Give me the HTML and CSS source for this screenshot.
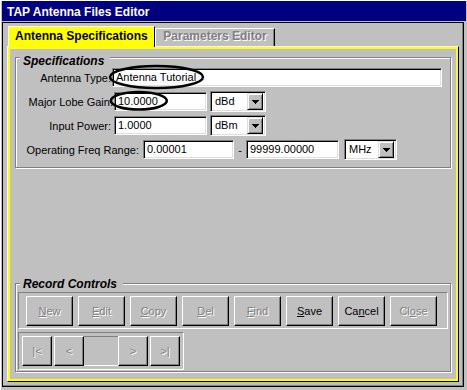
FILE: index.html
```html
<!DOCTYPE html>
<html>
<head>
<meta charset="utf-8">
<link rel="stylesheet" href="styles.css">
</head>
<body>
<div class="window">
  <div class="titlebar">TAP Antenna Files Editor</div>
  <div class="frame">
    <div class="tabs">
      <div class="tab active">Antenna Specifications</div>
      <div class="tab inactive">Parameters Editor</div>
    </div>
    <div class="panel">
      <div class="group spec">
        <div class="legend">Specifications</div>
        <div class="rows">
          <div class="row">
            <span class="lbl lbl-type">Antenna Type:</span>
            <div class="field f-type">Antenna Tutorial</div>
          </div>
          <div class="row">
            <span class="lbl lbl-gain">Major Lobe Gain:</span>
            <div class="field f-num">10.0000</div>
            <div class="combo c-unit"><span>dBd</span><span class="dd"><svg width="7" height="4" viewBox="0 0 7 4" shape-rendering="crispEdges"><path d="M0 0h7v1h-1v1h-1v1h-1v1h-1v-1h-1v-1h-1v-1h-1z" fill="#000"/></svg></span></div>
          </div>
          <div class="row">
            <span class="lbl lbl-power">Input Power:</span>
            <div class="field f-num">1.0000</div>
            <div class="combo c-unit"><span>dBm</span><span class="dd"><svg width="7" height="4" viewBox="0 0 7 4" shape-rendering="crispEdges"><path d="M0 0h7v1h-1v1h-1v1h-1v1h-1v-1h-1v-1h-1v-1h-1z" fill="#000"/></svg></span></div>
          </div>
          <div class="row">
            <span class="lbl lbl-freq">Operating Freq Range:</span>
            <div class="field f-lo">0.00001</div>
            <span class="dash">-</span>
            <div class="field f-hi">99999.00000</div>
            <div class="combo c-freq"><span>MHz</span><span class="dd"><svg width="7" height="4" viewBox="0 0 7 4" shape-rendering="crispEdges"><path d="M0 0h7v1h-1v1h-1v1h-1v1h-1v-1h-1v-1h-1v-1h-1z" fill="#000"/></svg></span></div>
          </div>
        </div>
      </div>
      <div class="group rec">
        <div class="legend">Record Controls</div>
        <div class="bar actions">
          <div class="btn off"><u>N</u>ew</div>
          <div class="btn off"><u>E</u>dit</div>
          <div class="btn off"><u>C</u>opy</div>
          <div class="btn off"><u>D</u>el</div>
          <div class="btn off"><u>F</u>ind</div>
          <div class="btn"><u>S</u>ave</div>
          <div class="btn">Ca<u>n</u>cel</div>
          <div class="btn off">Cl<u>o</u>se</div>
        </div>
        <div class="bar nav">
          <div class="nbtn off">|&lt;</div>
          <div class="nbtn off gap">&lt;</div>
          <div class="pos"></div>
          <div class="nbtn off">&gt;</div>
          <div class="nbtn off gap">&gt;|</div>
        </div>
      </div>
    </div>
  </div>
  <svg class="marks" width="467" height="390" viewBox="0 0 467 390">
    <ellipse cx="156.5" cy="77" rx="46.5" ry="11" fill="none" stroke="#000" stroke-width="2.5"/>
    <ellipse cx="138.8" cy="100.8" rx="28" ry="8.7" fill="none" stroke="#000" stroke-width="2.5"/>
  </svg>
</div>
</body>
</html>
```
FILE: styles.css
```css
* { box-sizing: border-box; }
html, body { margin: 0; padding: 0; }
body {
  background: #c0c0c0;
  font-family: "Liberation Sans", Arial, sans-serif;
  font-size: 11px;
  color: #000;
}
.window {
  position: relative;
  width: 467px;
  height: 390px;
  background: #c0c0c0;
  padding: 1px 1px 0 2px;
  box-shadow: inset 1px 1px 0 #fff;
  overflow: hidden;
}
.titlebar {
  height: 20px;
  background: #000080;
  color: #fff;
  font-weight: bold;
  font-size: 12px;
  line-height: 20px;
  padding: 1px 0 0 5px;
  white-space: nowrap;
}
.frame {
  margin-top: 1px;
  width: 462px;
  height: 365px;
  border: 1px solid #000;
  box-shadow: inset -1px -1px 0 #808080;
}
.tabs {
  display: flex;
  align-items: flex-end;
  height: 23px;
  padding: 3px 0 0 5px;
}
.tab {
  font-weight: bold;
  font-size: 12px;
  white-space: nowrap;
}
.tab.active {
  position: relative;
  z-index: 1;
  width: 147px;
  height: 21px;
  margin-bottom: -1px;
  background: #ffff00;
  border-top: 1px solid #fff;
  border-left: 1px solid #fff;
  border-right: 1px solid #000;
  line-height: 18px;
  padding-left: 6px;
}
.tab.inactive {
  width: 120px;
  height: 18px;
  border-top: 1px solid #fff;
  border-left: 1px solid #fff;
  border-right: 1px solid #000;
  box-shadow: inset -1px 0 0 #808080;
  color: #808080;
  text-shadow: 1px 1px 0 #fff;
  line-height: 14px;
  text-align: center;
}
.panel {
  margin-left: 4px;
  width: 452px;
  height: 336px;
  border-top: 1px solid #fff;
  border-left: 1px solid #fff;
  border-right: 1px solid #000;
  border-bottom: 1px solid #000;
  box-shadow: inset 0 0 0 2px #ffff00;
  padding: 10px 7px 9px 7px;
  display: flex;
  flex-direction: column;
  justify-content: space-between;
}
.group {
  border: 1px solid #808080;
  box-shadow: inset 1px 1px 0 #fff, 1px 1px 0 #fff;
}
.legend {
  width: max-content;
  background: #c0c0c0;
  font-weight: bold;
  font-style: italic;
  font-size: 12px;
  line-height: 12px;
  padding: 0 6px 0 3px;
  margin-left: 4px;
  white-space: nowrap;
}
.spec { padding-bottom: 7px; }
.spec .legend { margin-top: -3px; }
.rec { padding-bottom: 1px; }
.rec .legend { margin-top: -6px; }
.rows {
  display: flex;
  flex-direction: column;
  gap: 3px;
}
.row {
  display: flex;
  align-items: center;
  height: 21px;
  white-space: nowrap;
}
.lbl {
  flex: none;
  text-align: right;
  padding-right: 1px;
}
.lbl-type { width: 96px; }
.lbl-gain { width: 98px; }
.lbl-power { width: 98px; padding-right: 3px; }
.lbl-freq { width: 127px; padding-right: 4px; }
.field, .combo {
  height: 19px;
  background: #fff;
  border-top: 1px solid #808080;
  border-left: 1px solid #808080;
  border-bottom: 1px solid #fff;
  border-right: 1px solid #fff;
  box-shadow: inset 1px 1px 0 #000, inset -1px -1px 0 #dfdfdf;
  padding-left: 3px;
  line-height: 17px;
  flex: none;
}
.f-type { width: 330px; }
.f-num { width: 93px; }
.f-lo { width: 91px; }
.f-hi { width: 93px; }
.dash {
  width: 12px;
  text-align: center;
  flex: none;
}
.combo {
  height: 21px;
  display: flex;
  align-items: center;
  justify-content: space-between;
  padding: 0 2px 0 4px;
}
.c-unit { width: 56px; margin-left: 3px; }
.c-freq { width: 53px; margin-left: 5px; }
.dd {
  width: 16px;
  height: 17px;
  background: #c0c0c0;
  border-top: 1px solid #dfdfdf;
  border-left: 1px solid #dfdfdf;
  border-bottom: 1px solid #000;
  border-right: 1px solid #000;
  box-shadow: inset 1px 1px 0 #fff, inset -1px -1px 0 #808080;
  display: flex;
  align-items: center;
  justify-content: center;
}
.dd svg { display: block; }
.bar {
  border-top: 1px solid #808080;
  border-left: 1px solid #808080;
  border-bottom: 1px solid #fff;
  border-right: 1px solid #fff;
  margin: 0 2px;
}
.actions {
  margin-top: 2px;
  display: flex;
  gap: 5px;
  padding: 3px 0 2px 7px;
}
.btn, .nbtn {
  height: 30px;
  border-top: 1px solid #fff;
  border-left: 1px solid #fff;
  border-bottom: 1px solid #000;
  border-right: 1px solid #000;
  box-shadow: inset -1px -1px 0 #808080;
  display: flex;
  align-items: center;
  justify-content: center;
  flex: none;
  white-space: nowrap;
}
.btn { width: 47px; }
.nbtn { width: 30px; }
.nbtn.gap { margin-left: 2px; }
.off {
  color: #808080;
  text-shadow: 1px 1px 0 #fff;
}
.nav {
  margin-top: 3px;
  width: max-content;
  display: flex;
  padding: 3px 3px 3px 3px;
}
.pos {
  width: 34px;
  height: 30px;
  border-top: 1px solid #808080;
  border-bottom: 1px solid #fff;
  flex: none;
}
.marks {
  position: absolute;
  left: 0;
  top: 0;
  pointer-events: none;
}
```
